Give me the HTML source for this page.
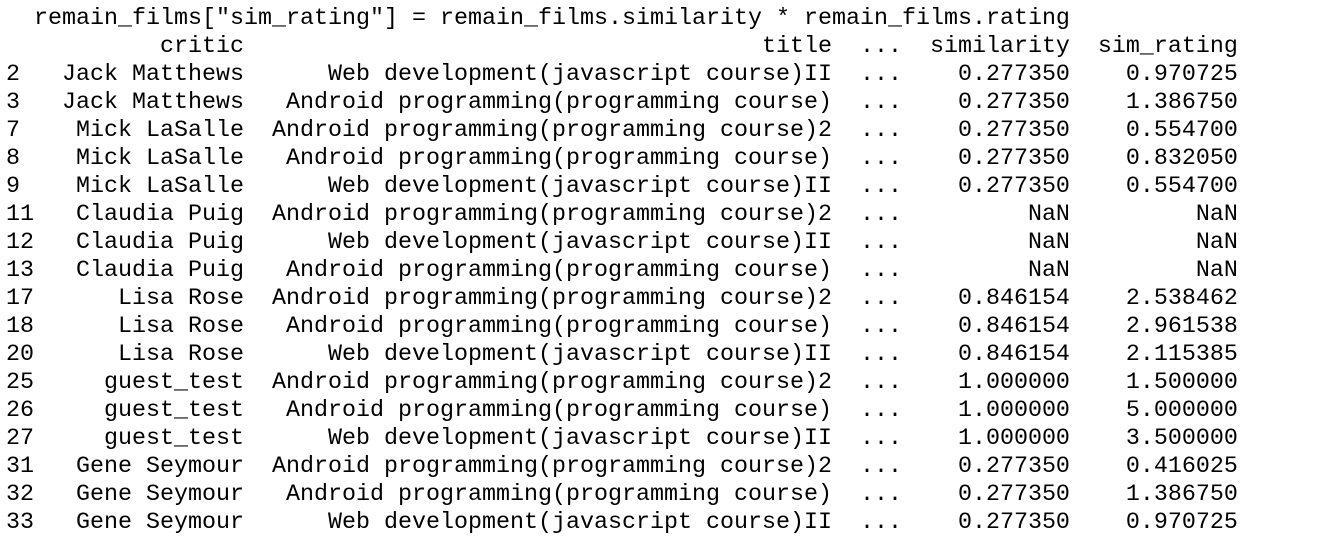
<!DOCTYPE html>
<html><head><meta charset="utf-8"><style>
html,body{margin:0;padding:0;background:#fff;width:1322px;height:554px;overflow:hidden}
pre{margin:0;position:absolute;left:6px;top:5px;font-family:"Liberation Mono",monospace;font-size:23.33px;line-height:28px;color:#000;white-space:pre}
</style></head><body>
<pre>  remain_films["sim_rating"] = remain_films.similarity * remain_films.rating
           critic                                     title  ...  similarity  sim_rating
2   Jack Matthews      Web development(javascript course)II  ...    0.277350    0.970725
3   Jack Matthews   Android programming(programming course)  ...    0.277350    1.386750
7    Mick LaSalle  Android programming(programming course)2  ...    0.277350    0.554700
8    Mick LaSalle   Android programming(programming course)  ...    0.277350    0.832050
9    Mick LaSalle      Web development(javascript course)II  ...    0.277350    0.554700
11   Claudia Puig  Android programming(programming course)2  ...         NaN         NaN
12   Claudia Puig      Web development(javascript course)II  ...         NaN         NaN
13   Claudia Puig   Android programming(programming course)  ...         NaN         NaN
17      Lisa Rose  Android programming(programming course)2  ...    0.846154    2.538462
18      Lisa Rose   Android programming(programming course)  ...    0.846154    2.961538
20      Lisa Rose      Web development(javascript course)II  ...    0.846154    2.115385
25     guest_test  Android programming(programming course)2  ...    1.000000    1.500000
26     guest_test   Android programming(programming course)  ...    1.000000    5.000000
27     guest_test      Web development(javascript course)II  ...    1.000000    3.500000
31   Gene Seymour  Android programming(programming course)2  ...    0.277350    0.416025
32   Gene Seymour   Android programming(programming course)  ...    0.277350    1.386750
33   Gene Seymour      Web development(javascript course)II  ...    0.277350    0.970725</pre>
</body></html>
